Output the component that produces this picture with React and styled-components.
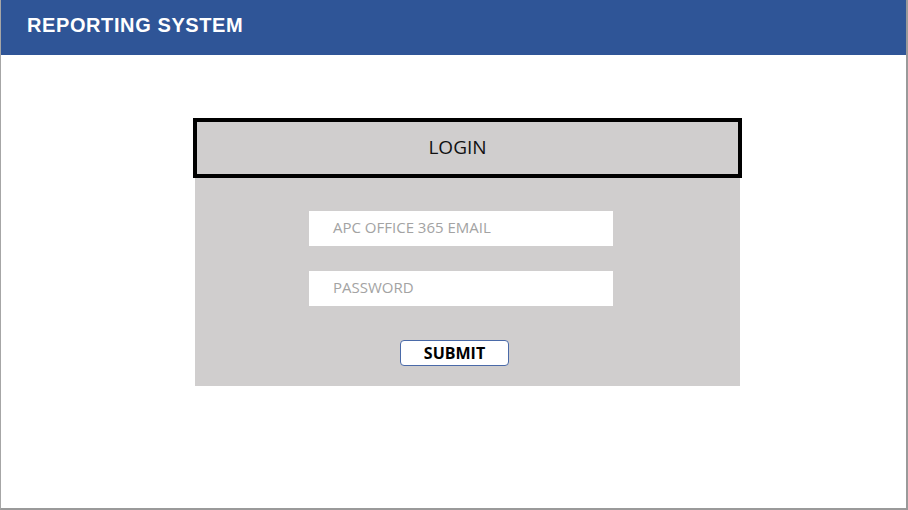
import React from "react";
import styled, { createGlobalStyle } from "styled-components";

const Global = createGlobalStyle`
  html, body { margin: 0; padding: 0; background: #ffffff; }
  body { width: 908px; height: 510px; overflow: hidden; }
`;

const Slide = styled.div`
  width: 905px;
  height: 508px;
  background: #ffffff;
  border-left: 1px solid #a6a6a6;
  border-right: 2px solid #9a9a9a;
  border-bottom: 2px solid #9a9a9a;
  display: flex;
  flex-direction: column;
`;

const TopBar = styled.header`
  height: 55px;
  background: #2f5597;
  display: flex;
  align-items: center;
  padding-left: 26px;
  padding-bottom: 4px;
  box-sizing: border-box;
`;

const Title = styled.h1`
  margin: 0;
  color: #ffffff;
  font-family: "Liberation Sans", Arial, sans-serif;
  font-weight: 700;
  font-size: 20px;
  letter-spacing: 0.6px;
`;

const Card = styled.section`
  margin-top: 63px;
  margin-left: 192px;
  width: 549px;
  display: flex;
  flex-direction: column;
`;

const CardHead = styled.div`
  height: 60px;
  box-sizing: border-box;
  border: 4px solid #000000;
  background: #d0cece;
  display: flex;
  align-items: center;
  justify-content: center;
  font-family: "Open Sans", "Noto Sans", sans-serif;
  font-size: 19px;
  color: #111;
  padding-right: 20px;
  padding-bottom: 2px;
`;

const CardBody = styled.div`
  margin: 0 2px;
  height: 208px;
  background: #d0cece;
  box-sizing: border-box;
  padding: 33px 0 0 114px;
  display: flex;
  flex-direction: column;
  align-items: flex-start;
`;

const Field = styled.div`
  width: 304px;
  height: 35px;
  background: #ffffff;
  box-sizing: border-box;
  padding: 0 0 3px 24px;
  display: flex;
  align-items: center;
  font-family: "Open Sans", "Noto Sans", sans-serif;
  font-size: 15px;
  color: #a3a3a3;
  margin-bottom: ${(p) => p.$gap}px;
`;

const Submit = styled.button`
  margin-left: 91px;
  width: 109px;
  height: 26px;
  background: #ffffff;
  border: 1px solid #4a6aa8;
  border-radius: 4px;
  font-family: "Open Sans", "Noto Sans", sans-serif;
  font-weight: 700;
  font-size: 16px;
  color: #000;
  padding: 0 0 1px;
  display: flex;
  align-items: center;
  justify-content: center;
`;

export default function App() {
  return (
    <>
      <Global />
      <Slide>
        <TopBar>
          <Title>REPORTING SYSTEM</Title>
        </TopBar>
        <Card>
          <CardHead>LOGIN</CardHead>
          <CardBody>
            <Field $gap={25}>APC OFFICE 365 EMAIL</Field>
            <Field $gap={34}>PASSWORD</Field>
            <Submit>SUBMIT</Submit>
          </CardBody>
        </Card>
      </Slide>
    </>
  );
}
